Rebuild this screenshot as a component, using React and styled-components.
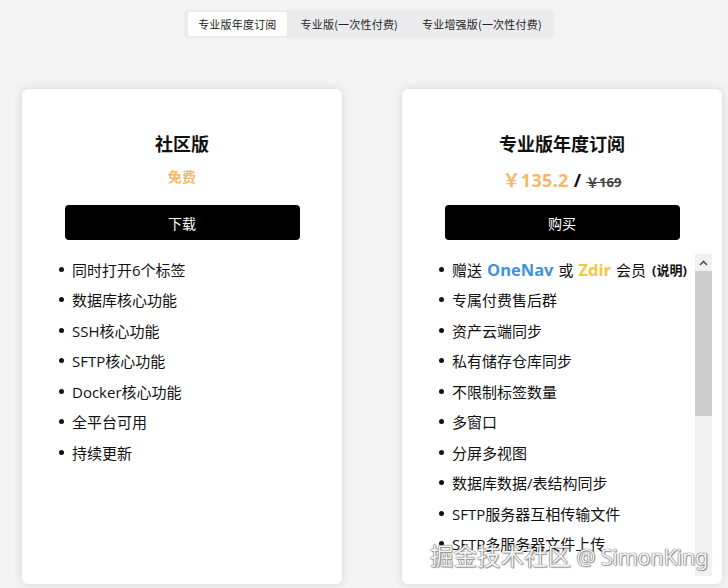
import React from 'react';
import styled, { createGlobalStyle } from 'styled-components';

const GlobalStyle = createGlobalStyle`
    html, body {
        margin: 0;
        padding: 0;
        background: #f3f3f4;
    }
    body {
        font-family: "Noto Sans", "Noto Sans CJK SC", sans-serif;
        color: #111;
    }
`;

const Page = styled.div`
    position: relative;
    width: 728px;
    height: 588px;
    overflow: hidden;
    display: flex;
    flex-direction: column;
    align-items: center;
    padding-top: 10px;
    box-sizing: border-box;
`;

const TabBar = styled.div`
    display: flex;
    gap: 4px;
    padding: 2px 2px 2px 4px;
    margin-left: 10px;
    background: #ebebee;
    border-radius: 4px;
`;

const Tab = styled.div`
    height: 24px;
    line-height: 24px;
    padding: 0 10px;
    font-size: 11px;
    letter-spacing: 0.2px;
    color: #222;
    font-family: "Noto Sans CJK SC", sans-serif;
    border-radius: 3px;
    background: ${p => (p.$active ? '#fff' : 'transparent')};
`;

const Cards = styled.div`
    align-self: stretch;
    display: flex;
    gap: 60px;
    padding-left: 22px;
    margin-top: 51px;
`;

const Card = styled.div`
    width: 320px;
    height: 495px;
    flex-shrink: 0;
    background: #fff;
    border-radius: 6px;
    box-shadow: 0 0 10px rgba(0, 0, 0, 0.12);
    display: flex;
    flex-direction: column;
    align-items: center;
    padding: 41px 0 8px;
    box-sizing: border-box;
    overflow: hidden;
`;

const Title = styled.h2`
    margin: 0;
    font-size: 18px;
    line-height: 26px;
    font-weight: 700;
    font-family: "Noto Sans CJK SC", sans-serif;
    color: #111;
`;

const Price = styled.div`
    margin-top: 10px;
    height: 24px;
    display: flex;
    align-items: baseline;
    justify-content: center;
    font-weight: 700;
    font-family: "Open Sans", "Noto Sans CJK SC", sans-serif;
`;

const Amount = styled.span`
    color: #f6b76b;
    font-size: ${p => p.$size || 18}px;
    letter-spacing: 0.3px;
`;

const Slash = styled.span`
    font-size: 18px;
    color: #111;
    margin: 0 5px;
`;

const OldPrice = styled.span`
    font-size: 13px;
    color: #444;
    text-decoration: line-through;
`;

const Button = styled.button`
    margin-top: 15px;
    width: 235px;
    height: 35px;
    border: none;
    border-radius: 4px;
    background: #000;
    color: #fff;
    font-size: 14px;
    font-family: "Noto Sans CJK SC", sans-serif;
    cursor: pointer;
`;

const ScrollArea = styled.div`
    align-self: stretch;
    flex: 1;
    min-height: 0;
    display: flex;
    margin-top: 14px;
    padding-right: 10px;
`;

const Viewport = styled.div`
    flex: 1;
    overflow: hidden;
`;

const List = styled.ul`
    list-style: none;
    margin: 0;
    padding: 0 0 0 37px;
`;

const Item = styled.li`
    display: flex;
    align-items: center;
    height: 30.5px;
    font-size: 15px;
    font-family: "Open Sans", "Noto Sans CJK SC", sans-serif;
    color: #111;
    white-space: nowrap;

    &::before {
        content: "";
        width: 5px;
        height: 5px;
        border-radius: 50%;
        background: #111;
        margin-right: 8px;
        flex-shrink: 0;
    }
`;

const Brand = styled.b`
    font-size: 16.5px;
    margin: 0 5px;
    color: ${p => p.$color};
`;

const Note = styled.b`
    font-size: 13px;
    margin-left: 6px;
`;

const Scrollbar = styled.div`
    width: 17px;
    display: flex;
    flex-direction: column;
    background: #f1f1f1;
`;

const ScrollArrow = styled.div`
    height: 17px;
    display: flex;
    align-items: center;
    justify-content: center;
`;

const Thumb = styled.div`
    height: 145px;
    background: #cdcdcd;
`;

const Watermark = styled.div`
    position: absolute;
    right: 20px;
    bottom: 16px;
    font-size: 23.5px;
    line-height: 31px;
    font-family: "Noto Sans CJK SC", sans-serif;
    color: #f4f4f4;
    text-shadow: 0 0 1px #555, 0 0 1px #555, 1px 1px 1px rgba(0, 0, 0, 0.35);
    white-space: nowrap;
`;

const Handle = styled.span`
    font-family: "Noto Sans", sans-serif;
    font-size: 21.5px;
    letter-spacing: -0.2px;
`;

const communityFeatures = [
    '同时打开6个标签',
    '数据库核心功能',
    'SSH核心功能',
    'SFTP核心功能',
    'Docker核心功能',
    '全平台可用',
    '持续更新',
];

const proFeatures = [
    '专属付费售后群',
    '资产云端同步',
    '私有储存仓库同步',
    '不限制标签数量',
    '多窗口',
    '分屏多视图',
    '数据库数据/表结构同步',
    'SFTP服务器互相传输文件',
    'SFTP多服务器文件上传',
];

export default function App() {
    return (
        <Page>
            <GlobalStyle />
            <TabBar>
                <Tab $active>专业版年度订阅</Tab>
                <Tab>专业版(一次性付费)</Tab>
                <Tab>专业增强版(一次性付费)</Tab>
            </TabBar>
            <Cards>
                <Card>
                    <Title>社区版</Title>
                    <Price>
                        <Amount $size={14}>免费</Amount>
                    </Price>
                    <Button>下载</Button>
                    <ScrollArea>
                        <Viewport>
                            <List>
                                {communityFeatures.map(f => <Item key={f}>{f}</Item>)}
                            </List>
                        </Viewport>
                    </ScrollArea>
                </Card>
                <Card>
                    <Title>专业版年度订阅</Title>
                    <Price>
                        <Amount>￥135.2</Amount>
                        <Slash>/</Slash>
                        <OldPrice>￥169</OldPrice>
                    </Price>
                    <Button>购买</Button>
                    <ScrollArea>
                        <Viewport>
                            <List>
                                <Item>
                                    赠送<Brand $color="#3f93d8">OneNav</Brand>或<Brand $color="#f5c73d">Zdir</Brand>会员<Note>(说明)</Note>
                                </Item>
                                {proFeatures.map(f => <Item key={f}>{f}</Item>)}
                            </List>
                        </Viewport>
                        <Scrollbar>
                            <ScrollArrow>
                                <svg width="9" height="6" viewBox="0 0 9 6">
                                    <path d="M1 5 L4.5 1.5 L8 5" fill="none" stroke="#505050" strokeWidth="1.6" />
                                </svg>
                            </ScrollArrow>
                            <Thumb />
                        </Scrollbar>
                    </ScrollArea>
                </Card>
            </Cards>
            <Watermark>掘金技术社区 <Handle>@ SimonKing</Handle></Watermark>
        </Page>
    );
}
